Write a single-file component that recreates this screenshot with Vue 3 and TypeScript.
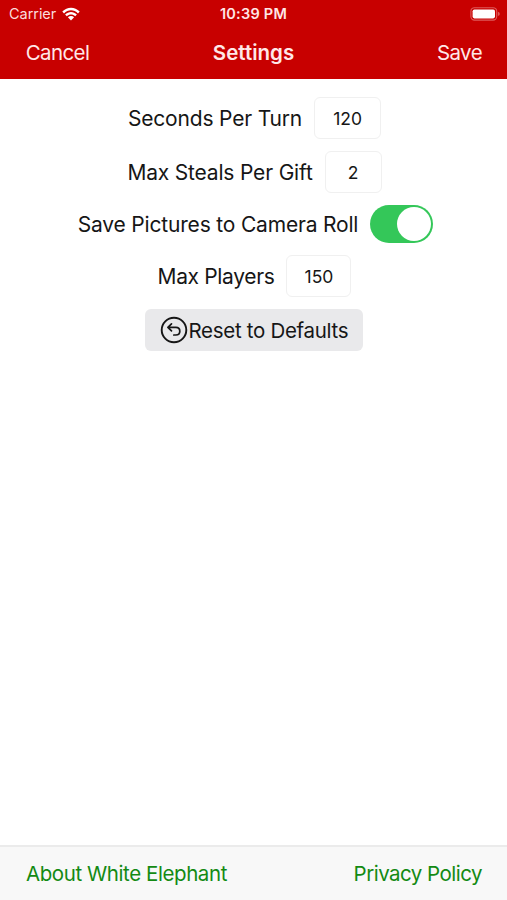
<script setup lang="ts">
import { ref } from 'vue'

const secondsPerTurn = ref('120')
const maxSteals = ref('2')
const maxPlayers = ref('150')
const savePictures = ref(true)

function resetDefaults(): void {
  secondsPerTurn.value = '120'
  maxSteals.value = '2'
  maxPlayers.value = '150'
  savePictures.value = true
}
</script>

<template>
  <div class="screen">
    <header class="top">
      <div class="status">
        <div class="carrier">
          <span class="carrier-name">Carrier</span>
          <svg class="wifi" viewBox="0 0 18 14" width="18" height="14">
            <path d="M0.3 4.6C5.2-.6 12.8-.6 17.7 4.6L16 6.4C12 2.3 6 2.3 2 6.4Z" />
            <path d="M3.1 7.5C6.5 4.1 11.5 4.1 14.9 7.5L13.2 9.2C10.7 6.8 7.3 6.8 4.8 9.2Z" />
            <path d="M5.9 10.3C7.7 8.7 10.3 8.7 12.1 10.3L9 13.5Z" />
          </svg>
        </div>
        <span class="clock">10:39 PM</span>
        <svg class="battery" viewBox="0 0 30 14" width="30" height="14">
          <rect x="0.9" y="0.7" width="25.8" height="12.4" rx="3.6" fill="none" stroke="#dd5a5a" stroke-width="1.1" />
          <rect x="2.6" y="2.4" width="22.4" height="9" rx="1.8" fill="#fff" />
          <path d="M27.9 4.8Q29.8 5.4 29.8 6.9T27.9 9Z" fill="#dd5a5a" />
        </svg>
      </div>
      <nav class="nav">
        <span class="nav-cancel">Cancel</span>
        <span class="nav-title">Settings</span>
        <span class="nav-save">Save</span>
      </nav>
    </header>

    <main class="form">
      <div class="row">
        <span class="label seconds">Seconds Per Turn</span>
        <span class="field w-seconds">{{ secondsPerTurn }}</span>
      </div>
      <div class="row">
        <span class="label steals">Max Steals Per Gift</span>
        <span class="field w-steals">{{ maxSteals }}</span>
      </div>
      <div class="row wide">
        <span class="label pictures">Save Pictures to Camera Roll</span>
        <span class="toggle" :class="{ on: savePictures }" @click="savePictures = !savePictures">
          <span class="knob"></span>
        </span>
      </div>
      <div class="row">
        <span class="label players">Max Players</span>
        <span class="field w-players">{{ maxPlayers }}</span>
      </div>
      <div class="reset" @click="resetDefaults">
        <svg class="undo" viewBox="0 0 28 28" width="28" height="28">
          <circle cx="14" cy="14" r="12.3" />
          <path class="arrow" d="M11.5 7.9L7.9 11.4L11.5 14.9M8.2 11.4H15.9C18.4 11.4 19.8 13 19.8 15.2S18.4 19 15.9 19H13.8" />
        </svg>
        <span class="reset-text">Reset to Defaults</span>
      </div>
    </main>

    <footer class="bottom">
      <span class="about">About White Elephant</span>
      <span class="privacy">Privacy Policy</span>
    </footer>
  </div>
</template>

<style>
body {
  margin: 0;
  background: #fff;
}
</style>

<style scoped>
.screen {
  width: 507px;
  height: 900px;
  display: flex;
  flex-direction: column;
  overflow: hidden;
  font-family: Inter, "Liberation Sans", sans-serif;
  font-size: 20.5px;
  color: #161616;
  white-space: nowrap;
}
.top {
  height: 79px;
  background: #c80000;
  color: #fff;
}
.status {
  display: grid;
  grid-template-columns: 1fr auto 1fr;
  align-items: center;
  height: 27px;
  padding: 0 7px 0 9px;
}
.carrier {
  display: flex;
  align-items: center;
  gap: 6px;
  color: #fbdcdc;
}
.carrier-name {
  font-size: 14.5px;
  letter-spacing: -0.05px;
}
.wifi {
  fill: #fff;
}
.clock {
  font-size: 14.5px;
  font-weight: 600;
  letter-spacing: 0.25px;
  margin-right: 2px;
  color: #ffe6e6;
}
.battery {
  justify-self: end;
}
.nav {
  display: grid;
  grid-template-columns: 1fr auto 1fr;
  align-items: center;
  height: 50px;
  padding: 0 25px;
  color: #ffe8e8;
}
.nav-cancel {
  padding-left: 0.7px;
  letter-spacing: -0.6px;
}
.nav-title {
  font-weight: 600;
}
.nav-save {
  justify-self: end;
  letter-spacing: -0.6px;
}
.form {
  flex: 1;
  display: flex;
  flex-direction: column;
  align-items: center;
  gap: 12px;
  padding-top: 18px;
}
.row {
  display: flex;
  align-items: center;
  gap: 12px;
  margin-left: 2px;
}
.wide {
  margin-left: 4px;
}
.label {
  font-size: 21px;
  letter-spacing: -0.18px;
}
.players {
  letter-spacing: -0.35px;
}
.field {
  display: flex;
  align-items: center;
  justify-content: center;
  box-sizing: border-box;
  height: 42px;
  border: 1px solid #f0f0f0;
  border-radius: 6px;
  font-size: 17.5px;
}
.w-seconds {
  width: 67px;
}
.w-steals {
  width: 57px;
}
.w-players {
  width: 65px;
}
.toggle {
  display: flex;
  align-items: center;
  box-sizing: border-box;
  width: 63px;
  height: 38px;
  padding: 2px;
  border-radius: 19px;
  background: #e9e9ea;
}
.toggle.on {
  justify-content: flex-end;
  background: #34c759;
}
.knob {
  width: 34px;
  height: 34px;
  border-radius: 50%;
  background: #fff;
}
.reset {
  display: flex;
  align-items: center;
  gap: 1px;
  box-sizing: border-box;
  width: 218px;
  height: 42px;
  padding-left: 15px;
  border-radius: 6px;
  background: #e9e9eb;
}
.reset-text {
  letter-spacing: -0.3px;
}
.undo {
  flex: none;
  fill: none;
  stroke: #161616;
  stroke-width: 1.9;
  stroke-linecap: round;
  stroke-linejoin: round;
}
.arrow {
  stroke-width: 1.7;
}
.bottom {
  display: flex;
  justify-content: space-between;
  align-items: center;
  box-sizing: border-box;
  height: 55px;
  padding: 0 25px 1px 26px;
  border-top: 2px solid #ebebeb;
  background: #f8f8f8;
  color: #138a13;
}
.about {
  letter-spacing: -0.42px;
}
.privacy {
  letter-spacing: -0.52px;
}
</style>
